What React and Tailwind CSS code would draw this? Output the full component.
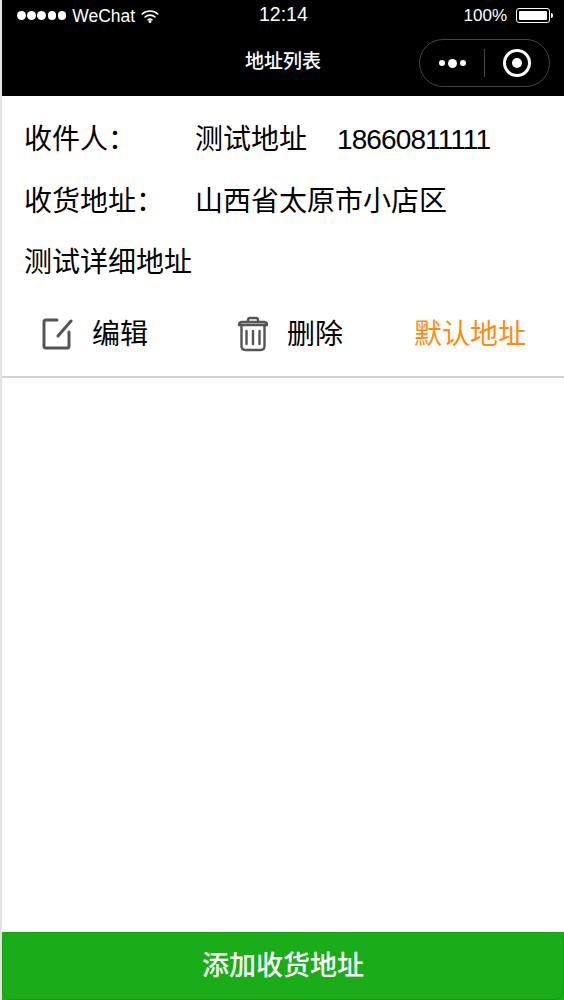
export default function App() {
  return (
    <div className="relative flex h-[1000px] w-[564px] flex-col overflow-hidden bg-white border-l-2 border-[#e2e2de] font-['Liberation_Sans','Noto_Sans_CJK_SC',sans-serif] text-black">
      <header className="h-[96px] shrink-0 bg-black text-white flex flex-col">
        <div className="relative flex h-[30px] items-center justify-between pl-[15px] pr-[11px] pt-[1px]">
          <div className="flex items-center gap-[6px]">
            <div className="flex gap-[1.7px]">
              {[0, 1, 2, 3, 4].map((i) => (
                <span key={i} className="h-[8.5px] w-[8.5px] rounded-full bg-white" />
              ))}
            </div>
            <span className="text-[17.5px] leading-[18px]">WeChat</span>
            <svg width="18" height="14" viewBox="0 0 18 14" fill="none" stroke="white" strokeWidth="1.6" strokeLinecap="round">
              <path d="M1.2 5 C5.5 1 12.5 1 16.8 5" />
              <path d="M4 8 C6.8 5.5 11.2 5.5 14 8" />
              <path d="M7 10.8 C8 10 10 10 11 10.8" />
              <circle cx="9" cy="12.4" r="0.7" fill="white" />
            </svg>
          </div>
          <span className="absolute left-[257px] top-[4px] text-[19.5px] leading-[20px]">12:14</span>
          <div className="flex items-center gap-[9px]">
            <span className="text-[17px] leading-[18px]">100%</span>
            <div className="flex items-center gap-[1px]">
              <div className="h-[15px] w-[34px] rounded-[3px] border border-white p-[2px]">
                <div className="h-full w-full rounded-[1px] bg-white" />
              </div>
              <div className="h-[5px] w-[2px] rounded-r-sm bg-white" />
            </div>
          </div>
        </div>
        <div className="relative flex h-[66px] items-center justify-center">
          <span className="text-[19px] leading-[24px] pb-[2px] font-medium">地址列表</span>
          <div className="absolute left-[417px] top-[9px] flex h-[48px] w-[131px] items-center rounded-full border border-[#444444]">
            <div className="flex w-[64px] items-center justify-center gap-[3px]">
              <span className="h-[6px] w-[6px] rounded-full bg-white" />
              <span className="h-[9px] w-[9px] rounded-full bg-white" />
              <span className="h-[6px] w-[6px] rounded-full bg-white" />
            </div>
            <div className="h-[28px] w-px bg-[#444444]" />
            <div className="flex flex-1 items-center justify-center">
              <div className="flex h-[28px] w-[28px] items-center justify-center rounded-full border-[3px] border-white">
                <div className="h-[10px] w-[10px] rounded-full bg-white" />
              </div>
            </div>
          </div>
        </div>
      </header>

      <main className="flex-1">
        <section className="border-b-2 border-[#d4d4d4] pt-[13px] text-[28px]">
          <div className="flex h-[62px] items-center pl-[22px]">
            <span className="w-[171px]">收件人：</span>
            <span>测试地址</span>
            <span className="ml-[30px] tracking-[-0.9px]">18660811111</span>
          </div>
          <div className="flex h-[61px] items-center pl-[22px]">
            <span className="w-[171px]">收货地址：</span>
            <span>山西省太原市小店区</span>
          </div>
          <div className="flex h-[61px] items-center pl-[22px]">测试详细地址</div>
          <div className="flex h-[83px] items-center">
            <svg className="ml-[39px] mb-[2px]" width="32" height="34" viewBox="0 0 32 34" fill="none" stroke="#555" strokeWidth="3" strokeLinecap="round" strokeLinejoin="round">
              <path d="M16 3 H5 Q3 3 3 5 V29 Q3 31 5 31 H26 Q28 31 28 29 V15" />
              <path d="M17 19 L30 4" />
            </svg>
            <span className="ml-[19px]">编辑</span>
            <svg className="ml-[89px] mb-[2px]" width="32" height="36" viewBox="0 0 32 36" fill="none" stroke="#555" strokeWidth="2.4" strokeLinecap="round" strokeLinejoin="round">
              <path d="M2 9 Q2 6 5 6 H27 Q30 6 30 9 Z" />
              <path d="M11 6 V4 Q11 2 13 2 H19 Q21 2 21 4 V6" />
              <path d="M4.5 10 V30 Q4.5 34 8.5 34 H23.5 Q27.5 34 27.5 30 V10" />
              <path d="M9.5 15 V28 M16 15 V28 M22.5 15 V28" />
            </svg>
            <span className="ml-[18px]">删除</span>
            <span className="ml-[71px] text-[#ff8c0f]">默认地址</span>
          </div>
        </section>
      </main>

      <button className="relative flex h-[68px] shrink-0 items-center justify-center bg-[#1aad19] text-[27px] text-white font-medium">
        添加收货地址
        <span className="absolute inset-0 rounded-[10px] border border-black/10" />
      </button>
    </div>
  );
}
